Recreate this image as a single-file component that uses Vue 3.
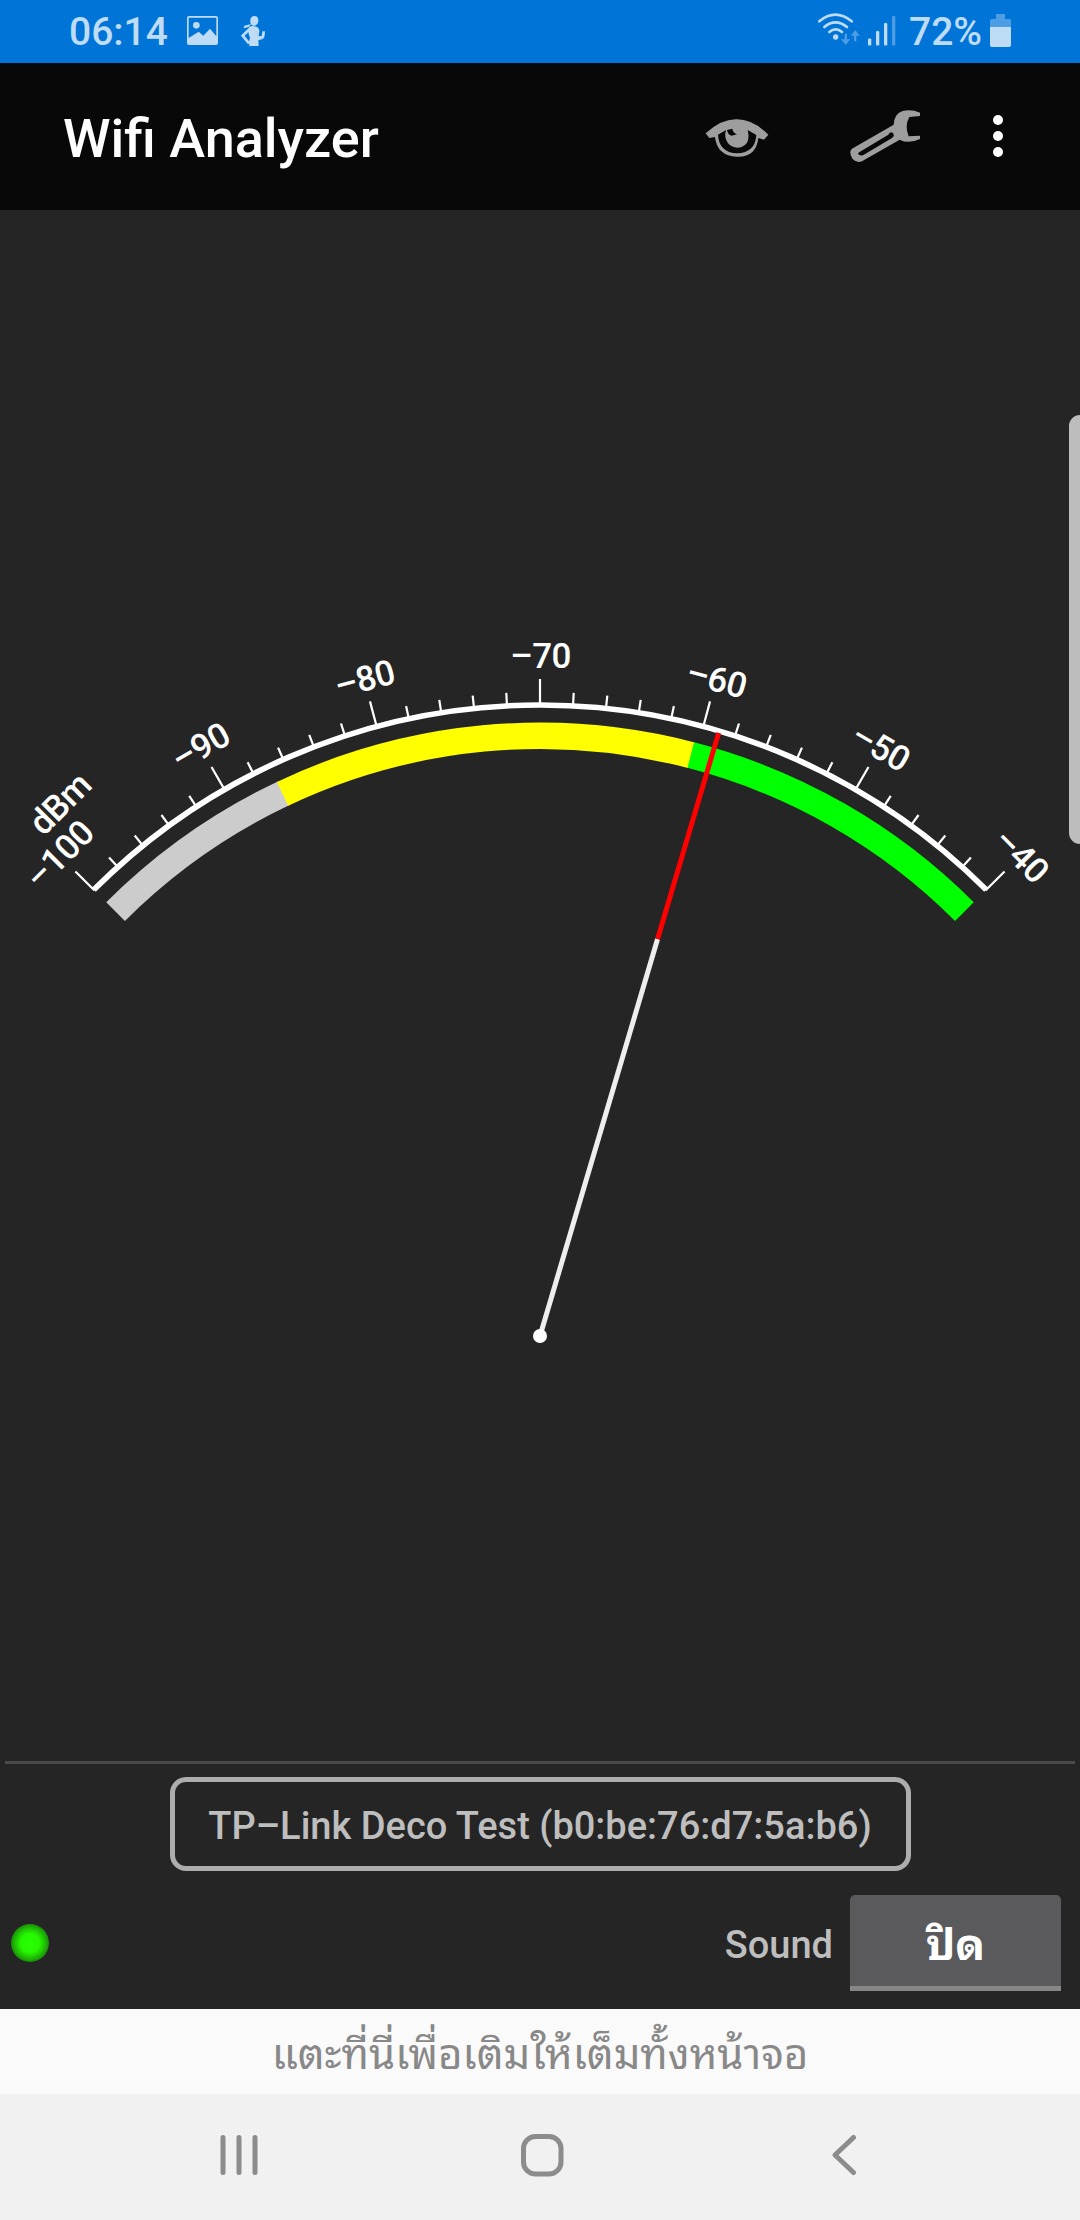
<template>
  <div class="phone">
    <!-- Status bar -->
    <header class="statusbar">
      <span class="clock">06:14</span>
      <svg class="picture-icon" width="31" height="29" viewBox="0 0 93 87">
        <path
          fill-rule="evenodd"
          d="M6 0H87Q93 0 93 6V81Q93 87 87 87H6Q0 87 0 81V6Q0 0 6 0ZM5 5V66L35 47L49 59L69 38L88 61V5Z"
        />
        <circle cx="28" cy="28" r="10" />
      </svg>
      <svg class="person-icon" width="24" height="30" viewBox="0 0 72 90">
        <path d="M28 11Q30 0 40 0Q52 0 52 13Q52 26 42 29H35Q30 26 28 20Z" />
        <path d="M30 24L10 29L8 37L23 33Z" />
        <path d="M24 33Q32 28 41 31Q54 33 55 44L53 61L62 60L64 46H72Q72 66 65 69L52 73L53 90H25L24 77L27 66L22 50Z" />
        <path class="arm" d="M26 39L5 59L24 82" />
      </svg>
      <span class="grow"></span>
      <svg class="wifi-icon" width="42" height="32" viewBox="0 0 126 96">
        <g class="wave">
          <path d="M4 25Q52 -15 101 25" />
          <path d="M19 42Q52 14 87 42" />
          <path d="M34 57Q53 41 72 57" />
        </g>
        <circle cx="53" cy="72" r="8" />
        <g class="traffic">
          <path d="M80 62H87V79H97L83 96L69 79H80Z" />
          <path d="M108 85H115V68H125L112 51L98 68H108Z" />
        </g>
      </svg>
      <svg class="signal-icon" width="28" height="30" viewBox="0 0 28 30">
        <rect x="0" y="22.5" width="3.3" height="7" rx="1" />
        <rect x="8" y="15" width="3.3" height="14.5" rx="1" />
        <rect x="16" y="7" width="3.3" height="22.5" rx="1" />
        <rect x="24" y="0" width="3.3" height="29.5" rx="1" opacity="0.4" />
      </svg>
      <span class="percent">72%</span>
      <svg class="battery-icon" width="21" height="33" viewBox="0 0 21 33">
        <path d="M6 0H15V5H19Q21 5 21 7V13H0V7Q0 5 2 5H6Z" opacity="0.4" />
        <path d="M0 13H21V31Q21 33 19 33H2Q0 33 0 31Z" />
      </svg>
    </header>

    <!-- App bar -->
    <div class="appbar">
      <h1>Wifi Analyzer</h1>
      <button class="eye">
        <svg width="64" height="40" viewBox="0 0 192 120">
          <path d="M2 46Q50 2 96 4Q144 4 190 50L177 65L160 60Q154 118 96 116Q36 114 30 57L13 60Z" />
          <path class="hole" d="M39 50L63 36Q56 58 69 76Q82 89 96 89Q115 89 126 74Q134 62 128 36L154 51Q151 104 96 106Q42 103 39 50Z" />
          <path class="hole" d="M66 36L82 32Q84 45 96 49L80 53Q69 51 66 36Z" />
        </svg>
      </button>
      <button class="wrench">
        <svg width="70" height="53" viewBox="0 0 210 159">
          <path
            fill-rule="evenodd"
            d="M210 8V18L178 21Q163 47 176 79L210 77V87Q176 103 149 89L36 154Q20 160 7 146Q-5 125 6 116L131 44Q133 11 158 3Q184 -3 210 8ZM30 125L115 74Q122 62 129 70Q135 77 126 84L39 136Q27 138 24 131Q24 128 30 125Z"
          />
        </svg>
      </button>
      <button class="more">
        <i v-for="n in 3" :key="n"></i>
      </button>
    </div>

    <!-- Signal meter -->
    <main class="meter">
      <svg width="1080" height="1551" viewBox="0 0 1080 1551">
        <path
          v-for="zone in zones"
          :key="zone.color"
          :d="arc(600.2, zone.from, zone.to)"
          :stroke="zone.color"
          stroke-width="26.4"
          fill="none"
        />
        <path :d="arc(631, -45, 45)" class="scale" />
        <line
          v-for="t in ticks"
          :key="t.value"
          class="tick"
          :x1="CX"
          :x2="CX"
          :y1="CY - 630"
          :y2="CY - (t.major ? 657 : 644)"
          :transform="`rotate(${t.angle} ${CX} ${CY})`"
        />
        <text
          v-for="t in majorTicks"
          :key="t.value"
          :x="CX + 0.5"
          :y="CY - 668"
          :transform="`rotate(${t.angle} ${CX} ${CY})`"
        >–{{ t.value }}</text>
        <text :x="CX + 37" :y="CY - 704" :transform="`rotate(-45 ${CX} ${CY})`">dBm</text>

        <!-- Needle -->
        <g :transform="`rotate(${toAngle(level)} ${CX} ${CY})`">
          <line class="needle" :x1="CX" :x2="CX" :y1="CY" :y2="CY - 414" />
          <line class="needle tip" :x1="CX" :x2="CX" :y1="CY - 414" :y2="CY - 629" />
        </g>
        <circle :cx="CX" :cy="CY" r="7" fill="#fff" />
      </svg>
      <div class="edge-handle"></div>
    </main>

    <!-- Selected network -->
    <section class="panel">
      <div class="divider"></div>
      <button class="network">TP–Link Deco Test (b0:be:76:d7:5a:b6)</button>
      <div class="sound-row">
        <span class="led"></span>
        <span class="grow"></span>
        <span class="sound-label">Sound</span>
        <button class="toggle">ปิด</button>
      </div>
    </section>

    <div class="hint"><span>แตะที่นี่เพื่อเติมให้เต็มทั้งหน้าจอ</span></div>

    <!-- Navigation bar -->
    <nav class="navbar">
      <svg width="38" height="42" viewBox="0 0 38 42">
        <path d="M3 3.5V38.5M19 3.5V38.5M35 3.5V38.5" />
      </svg>
      <svg class="home" width="44" height="44" viewBox="0 0 44 44">
        <rect x="3.5" y="3.5" width="37.5" height="37.5" rx="12" />
      </svg>
      <svg width="26" height="42" viewBox="0 0 26 42">
        <path d="M22.5 3.5L4 21L22.5 38.5" />
      </svg>
    </nav>
  </div>
</template>

<script setup>
import { ref } from "vue";

/* pivot of the needle */
const CX = 540;
const CY = 1126;

const level = ref(-59);

// -100..-40 dBm is spread over 90 degrees
const toAngle = (dbm) => (dbm + 70) * 1.5;

const ticks = Array.from({ length: 31 }, (_, i) => {
  const dbm = -100 + i * 2;
  return { value: -dbm, angle: toAngle(dbm), major: i % 5 === 0 };
});
const majorTicks = ticks.filter((t) => t.major);

const zones = [
  { color: "#cccccc", from: -45, to: -25.3 },
  { color: "#ffff00", from: -25.4, to: 14.6 },
  { color: "#00ff00", from: 14.55, to: 45 },
];

const point = (r, deg) => {
  const a = (deg * Math.PI) / 180;
  return `${CX + r * Math.sin(a)} ${CY - r * Math.cos(a)}`;
};

const arc = (r, from, to) =>
  `M${point(r, from)} A${r} ${r} 0 0 1 ${point(r, to)}`;
</script>

<style>
body {
  background: #252525;
}
</style>

<style scoped>
.phone {
  width: 1080px;
  height: 2220px;
  display: flex;
  flex-direction: column;
  overflow: hidden;
  background: #252525;
  font-family: Roboto, "Noto Sans Thai Looped", "Noto Sans Thai", "Noto Sans", sans-serif;
  font-weight: 500;
}

button {
  padding: 0;
  border: 0;
  background: none;
  font: inherit;
}

svg {
  display: block;
  flex: none;
}

.grow {
  flex: 1;
}

/* ---------- status bar ---------- */
.statusbar {
  height: 63px;
  flex: none;
  display: flex;
  align-items: flex-start;
  box-sizing: border-box;
  padding: 0 69px 0 69px;
  background: #0074d7;
  color: #bfdcf6;
  fill: #bfdcf6;
}

.clock,
.percent {
  font-size: 39px;
  line-height: 65px;
}

.clock {
  width: 118px;
}

.picture-icon {
  margin-top: 16px;
}

.person-icon {
  margin: 16px 0 0 23px;
}

.arm {
  fill: none;
  stroke: #bfdcf6;
  stroke-width: 8;
}

.wifi-icon {
  margin: 13px 8px 0 0;
}

.wave {
  fill: none;
  stroke: #bfdcf6;
  stroke-width: 8;
  stroke-linecap: round;
}

.traffic {
  opacity: 0.4;
}

.signal-icon {
  margin: 16px 13px 0 0;
}

.percent {
  width: 81px;
}

.battery-icon {
  margin-top: 14px;
}

/* ---------- app bar ---------- */
.appbar {
  height: 147px;
  flex: none;
  display: flex;
  align-items: flex-start;
  box-sizing: border-box;
  padding-left: 63px;
  background: #080808;
  fill: #9e9e9e;
}

h1 {
  width: 642px;
  margin: 0;
  color: #fff;
  font-size: 54px;
  font-weight: 500;
  line-height: 151px;
}

.eye {
  margin-top: 55px;
}

.hole {
  fill: #080808;
}

.wrench {
  margin: 47px 0 0 81px;
}

.more {
  display: flex;
  flex-direction: column;
  gap: 6px;
  margin: 52px 0 0 73px;
}

.more i {
  width: 10px;
  height: 10px;
  border-radius: 50%;
  background: #fff;
}

/* ---------- meter ---------- */
.meter {
  position: relative;
  height: 1551px;
  flex: none;
}

.scale {
  fill: none;
  stroke: #fff;
  stroke-width: 5.6;
}

.tick {
  stroke: #fff;
  stroke-width: 2.2;
}

.meter text {
  fill: #fff;
  font-size: 35px;
  letter-spacing: -0.6px;
  text-anchor: middle;
}

.needle {
  stroke: #eee;
  stroke-width: 5;
}

.tip {
  stroke: #f00;
}

.edge-handle {
  position: absolute;
  top: 205px;
  right: 0;
  width: 11px;
  height: 429px;
  border-radius: 11px 0 0 11px;
  background: #bdbdbd;
}

/* ---------- bottom panel ---------- */
.panel {
  height: 248px;
  flex: none;
  display: flex;
  flex-direction: column;
}

.divider {
  height: 3px;
  margin: 0 5px 13px;
  background: #4a4a4a;
}

.network {
  align-self: center;
  box-sizing: border-box;
  width: 741px;
  height: 94px;
  padding-top: 4px;
  border: 5px solid #adadad;
  border-radius: 16px;
  color: #bebebe;
  font-size: 38px;
  white-space: nowrap;
}

.sound-row {
  display: flex;
  align-items: center;
  height: 96px;
  margin-top: 24px;
  padding: 0 19px 0 11px;
}

.led {
  width: 38px;
  height: 38px;
  border-radius: 50%;
  background: radial-gradient(circle, #28ff00 0%, #26f800 35%, #1dac06 62%, #1a8a0a 71%);
}

.sound-label {
  margin-right: 17px;
  padding-top: 4px;
  color: #bebebe;
  font-size: 38px;
}

.toggle {
  box-sizing: border-box;
  width: 211px;
  height: 96px;
  padding-top: 8px;
  border-bottom: 5px solid #878787;
  border-radius: 5px 5px 0 0;
  background: #5a5a5c;
  color: #fff;
  font-size: 44px;
  line-height: 80px;
  font-weight: 700;
}

/* ---------- hint and navigation ---------- */
.hint {
  height: 85px;
  flex: none;
  display: flex;
  align-items: center;
  justify-content: center;
  box-sizing: border-box;
  padding-bottom: 4px;
  background: #fafafa;
  color: #888;
  font-size: 42px;
  font-weight: 400;
  white-space: nowrap;
}

.navbar {
  height: 126px;
  flex: none;
  display: flex;
  align-items: center;
  justify-content: space-between;
  box-sizing: border-box;
  padding: 0 223px 4px 220px;
  background: #f1f1f1;
}

.navbar svg {
  fill: none;
  stroke: #8c8c8c;
  stroke-width: 5;
  stroke-linecap: round;
  stroke-linejoin: round;
}

.navbar .home {
  margin-right: 6px;
}
</style>
